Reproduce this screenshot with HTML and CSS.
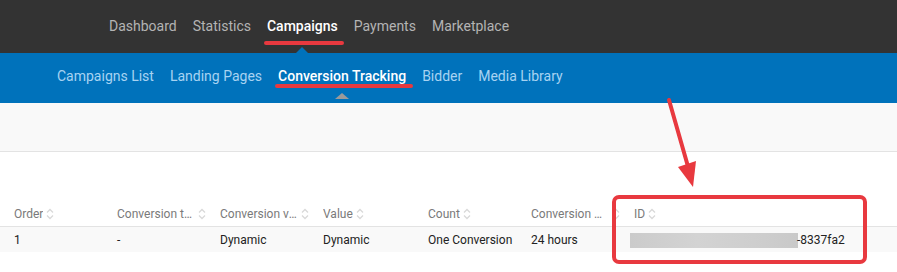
FILE: index.html
```html
<!DOCTYPE html>
<html>
<head>
<meta charset="utf-8">
<link rel="stylesheet" href="styles.css">
</head>
<body>
<div class="page">
  <nav class="topnav">
    <a class="top-item">Dashboard</a>
    <a class="top-item">Statistics</a>
    <a class="top-item active">Campaigns</a>
    <a class="top-item">Payments</a>
    <a class="top-item">Marketplace</a>
  </nav>
  <nav class="subnav">
    <a class="sub-item">Campaigns List</a>
    <a class="sub-item">Landing Pages</a>
    <a class="sub-item active">Conversion Tracking</a>
    <a class="sub-item">Bidder</a>
    <a class="sub-item">Media Library</a>
  </nav>
  <div class="toolbar"></div>
  <div class="table">
    <div class="row head">
      <div class="cell"><span class="label">Order</span><svg class="sort" viewBox="0 0 8 12"><path d="M1 4.5 L4 1.5 L7 4.5 M1 7.5 L4 10.5 L7 7.5"/></svg></div>
      <div class="cell"><span class="label">Conversion type</span><svg class="sort" viewBox="0 0 8 12"><path d="M1 4.5 L4 1.5 L7 4.5 M1 7.5 L4 10.5 L7 7.5"/></svg></div>
      <div class="cell"><span class="label">Conversion value</span><svg class="sort" viewBox="0 0 8 12"><path d="M1 4.5 L4 1.5 L7 4.5 M1 7.5 L4 10.5 L7 7.5"/></svg></div>
      <div class="cell"><span class="label">Value</span><svg class="sort" viewBox="0 0 8 12"><path d="M1 4.5 L4 1.5 L7 4.5 M1 7.5 L4 10.5 L7 7.5"/></svg></div>
      <div class="cell"><span class="label">Count</span><svg class="sort" viewBox="0 0 8 12"><path d="M1 4.5 L4 1.5 L7 4.5 M1 7.5 L4 10.5 L7 7.5"/></svg></div>
      <div class="cell"><span class="label">Conversion window</span><svg class="sort" viewBox="0 0 8 12"><path d="M1 4.5 L4 1.5 L7 4.5 M1 7.5 L4 10.5 L7 7.5"/></svg></div>
      <div class="cell"><span class="label">ID</span><svg class="sort" viewBox="0 0 8 12"><path d="M1 4.5 L4 1.5 L7 4.5 M1 7.5 L4 10.5 L7 7.5"/></svg></div>
    </div>
    <div class="row body">
      <div class="cell">1</div>
      <div class="cell">-</div>
      <div class="cell">Dynamic</div>
      <div class="cell">Dynamic</div>
      <div class="cell">One Conversion</div>
      <div class="cell">24 hours</div>
      <div class="cell id-cell"><span class="blur"></span><span class="id-tail">-8337fa2</span></div>
    </div>
  </div>
  <svg class="annot" viewBox="0 0 897 272" width="897" height="272">
    <line x1="669" y1="100" x2="689" y2="170" class="ann-line"/>
    <polygon points="678,167 696,161 693,187" class="ann-fill"/>
    <rect x="614" y="197" width="251" height="65" rx="5" ry="5" class="ann-box"/>
  </svg>
</div>
</body>
</html>
```

FILE: styles.css
```css
* { box-sizing: border-box; }
html, body { margin: 0; padding: 0; background: #fff; }
body { font-family: Roboto, "Liberation Sans", Arial, sans-serif; }
.page { position: relative; width: 897px; height: 272px; overflow: hidden; }

.topnav {
  height: 53px;
  background: #333333;
  display: flex;
  gap: 16px;
  padding-left: 109px;
}
.top-item {
  position: relative;
  display: block;
  font-size: 14px;
  line-height: 18px;
  padding-top: 17px;
  color: #b4b4b4;
}
.top-item.active { color: #ffffff; font-weight: 500; }
.top-item.active::after {
  content: "";
  position: absolute;
  left: -3px;
  right: -6px;
  top: 41px;
  height: 4px;
  border-radius: 2px;
  background: #e8393f;
}
.top-item.active::before {
  content: "";
  position: absolute;
  left: 50%;
  margin-left: -6px;
  top: 47px;
  border-left: 6px solid transparent;
  border-right: 6px solid transparent;
  border-bottom: 6px solid #0072bb;
}

.subnav {
  height: 50px;
  background: #0072bb;
  display: flex;
  gap: 16px;
  padding-left: 57px;
}
.sub-item {
  position: relative;
  display: block;
  font-size: 14px;
  line-height: 18px;
  padding-top: 14px;
  color: #a7d3f2;
}
.sub-item.active { color: #ffffff; font-weight: 500; }
.sub-item.active::after {
  content: "";
  position: absolute;
  left: -3px;
  right: -7px;
  top: 31px;
  height: 4px;
  border-radius: 2px;
  background: #e8393f;
}
.sub-item.active::before {
  content: "";
  position: absolute;
  left: 50%;
  margin-left: -7px;
  top: 40px;
  border-left: 7px solid transparent;
  border-right: 7px solid transparent;
  border-bottom: 6px solid #9a9a9a;
}

.toolbar {
  height: 49px;
  background: #f9f9f9;
  border-bottom: 1px solid #e3e3e3;
}

.table { padding-top: 49px; }
.row {
  display: grid;
  grid-template-columns: 103px 103px 103px 105px 103px 103px 1fr;
}
.row.head {
  height: 26px;
  border-bottom: 1px solid #e3e3e3;
  color: #7a7a7a;
}
.row.body {
  height: 25px;
  background: #f9f9f9;
  color: #222222;
}
.cell {
  display: flex;
  align-items: center;
  padding-left: 14px;
  font-size: 12px;
  min-width: 0;
  white-space: nowrap;
}
.body .cell { padding-top: 1px; }
.label {
  overflow: hidden;
  text-overflow: ellipsis;
  white-space: nowrap;
  min-width: 0;
}
.sort {
  flex: none;
  width: 8px;
  height: 12px;
  margin-left: 3px;
}
.sort path { fill: none; stroke: #d9d9d9; stroke-width: 1.3; }

.id-cell { padding-left: 10px; }
.blur {
  display: block;
  width: 168px;
  height: 15px;
  background: linear-gradient(90deg, #cbcbcb, #d3d3d3 40%, #cdcdcd 80%, #c9c9c9);
}
.id-tail { margin-left: -1px; }

.annot { position: absolute; left: 0; top: 0; pointer-events: none; }
.ann-line { stroke: #e8393f; stroke-width: 4; stroke-linecap: round; }
.ann-fill { fill: #e8393f; }
.ann-box { fill: none; stroke: #e8393f; stroke-width: 4; }
```
